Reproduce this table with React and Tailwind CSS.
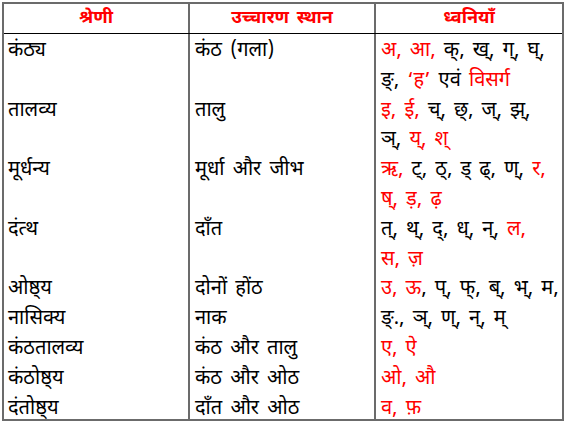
const R = ({ children }) => <span className="text-[#ff0000]">{children}</span>;

const rows = [
  {
    cat: "कंठ्य",
    place: "कंठ (गला)",
    lines: [
      <>
        <R>अ, आ,</R> क्, ख्, ग्, घ्,
      </>,
      <>
        ङ्, <R>‘ह’</R> एवं <R>विसर्ग</R>
      </>,
    ],
  },
  {
    cat: "तालव्य",
    place: "तालु",
    lines: [
      <>
        <R>इ, ई,</R> च्, छ्, ज्, झ्,
      </>,
      <>
        ञ्, <R>य्, श्</R>
      </>,
    ],
  },
  {
    cat: "मूर्धन्य",
    place: "मूर्धा और जीभ",
    lines: [
      <>
        <R>ऋ,</R> ट्, ठ्, ड् ढ्, ण्, <R>र,</R>
      </>,
      <>
        <R>ष्, ड़, ढ़</R>
      </>,
    ],
  },
  {
    cat: "दंत्थ",
    place: "दाँत",
    lines: [
      <>
        त्, थ्, द्, ध्, न्, <R>ल,</R>
      </>,
      <>
        <R>स, ज़</R>
      </>,
    ],
  },
  {
    cat: "ओष्ठ्य",
    place: "दोनों होंठ",
    lines: [
      <>
        <R>उ, ऊ</R>, प्, फ्, ब्, भ्, म,
      </>,
    ],
  },
  { cat: "नासिक्य", place: "नाक", lines: [<>ङ्., ञ्, ण्, न्, म्</>] },
  { cat: "कंठतालव्य", place: "कंठ और तालु", lines: [<R>ए, ऐ</R>] },
  { cat: "कंठोष्ठ्य", place: "कंठ और ओठ", lines: [<R>ओ, औ</R>] },
  { cat: "दंतोष्ठ्य", place: "दाँत और ओठ", lines: [<R>व, फ़</R>] },
];

const LH = 29.8;

export default function App() {
  return (
    <div className="w-[565px] h-[423px] bg-white pt-[2px] pl-[2px]">
      <div
        className="w-[562px] h-[419px] border-2 border-[#6b6b6b] text-[20px] text-black overflow-hidden"
        style={{ fontFamily: '"Noto Sans Devanagari", "Lohit Devanagari", Mangal, "Noto Sans", sans-serif' }}
      >
        {/* header */}
        <div className="grid grid-cols-[186px_186px_1fr] h-[30px] border-b border-black font-bold text-[18px] text-[#ff0000]">
          <div className="flex items-center justify-center border-r-2 border-[#6b6b6b]">श्रेणी</div>
          <div className="flex items-center justify-center border-r-2 border-[#6b6b6b] [word-spacing:3px]">उच्चारण स्थान</div>
          <div className="flex items-center justify-center">ध्वनियाँ</div>
        </div>
        {/* body */}
        <div className="grid grid-cols-[186px_186px_1fr] h-[400px] [word-spacing:3px]">
          <div className="border-r-2 border-[#6b6b6b] pl-[4px] pt-[3px]">
            {rows.map((r, i) => (
              <div key={i} style={{ height: r.lines.length * LH, lineHeight: `${LH}px` }}>
                {r.cat}
              </div>
            ))}
          </div>
          <div className="border-r-2 border-[#6b6b6b] pl-[5px] pt-[3px]">
            {rows.map((r, i) => (
              <div key={i} style={{ height: r.lines.length * LH, lineHeight: `${LH}px` }}>
                {r.place}
              </div>
            ))}
          </div>
          <div className="pl-[5px] pt-[3px]">
            {rows.map((r, i) => (
              <div key={i}>
                {r.lines.map((l, j) => (
                  <div key={j} className="whitespace-nowrap" style={{ height: LH, lineHeight: `${LH}px` }}>
                    {l}
                  </div>
                ))}
              </div>
            ))}
          </div>
        </div>
      </div>
    </div>
  );
}
